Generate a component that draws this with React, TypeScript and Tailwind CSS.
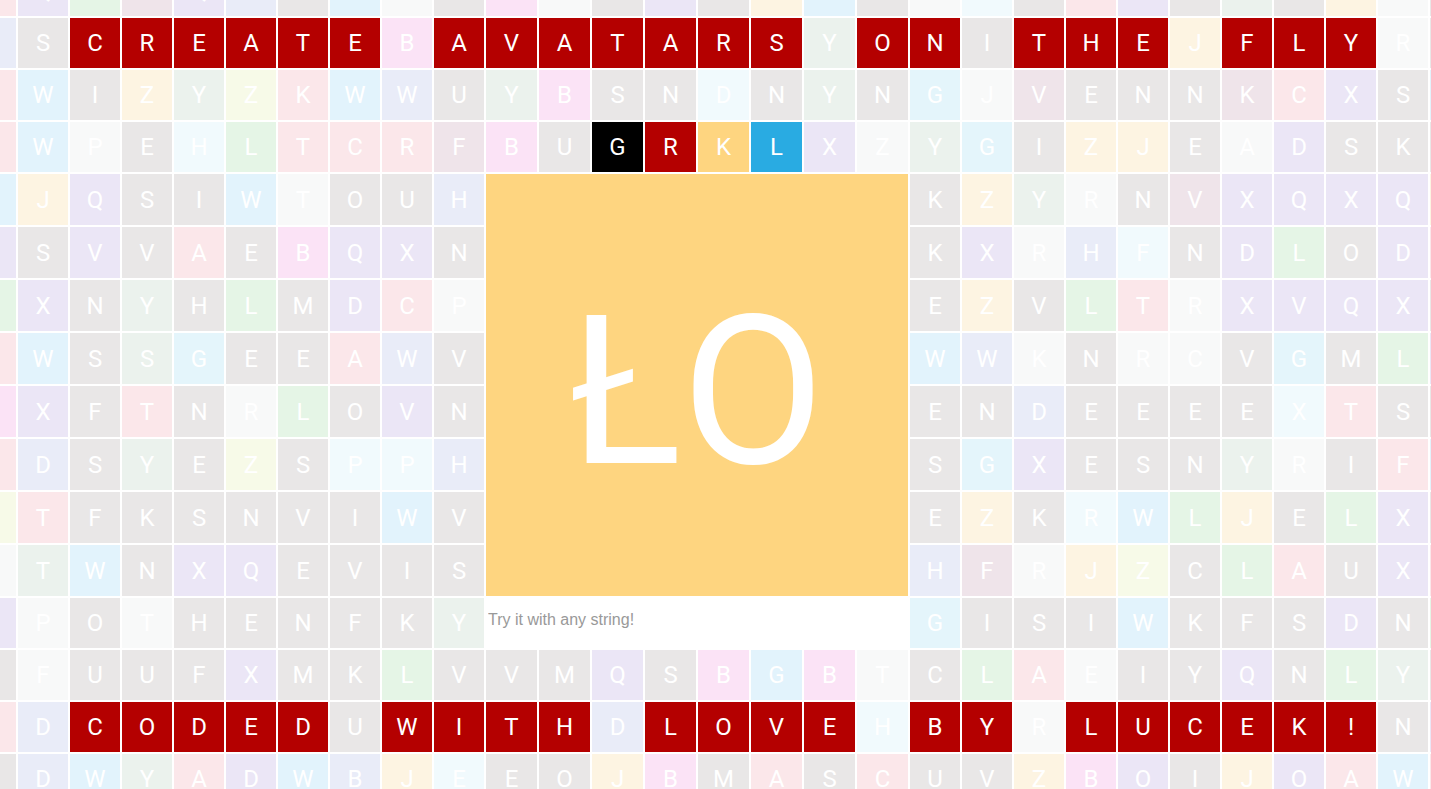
const tileColors: Record<string, string> = {
  g: "bg-[#e9e7e7]",
  p: "bg-[#ebe6f6]",
  l: "bg-[#e9ecf8]",
  b: "bg-[#e2f3fc]",
  c: "bg-[#e4f5fb]",
  k: "bg-[#fbe3f6]",
  r: "bg-[#fbe7ea]",
  m: "bg-[#efe4ea]",
  n: "bg-[#e5f5e6]",
  s: "bg-[#ebf2ed]",
  y: "bg-[#fdf4e2]",
  z: "bg-[#f7fae8]",
  w: "bg-[#f8f9f9]",
  h: "bg-[#f1fafd]",
  R: "bg-[#b40000]",
  K: "bg-[#000000]",
  Y: "bg-[#fed580]",
  B: "bg-[#29abe2]",
};

// each row: letters and colour codes for the columns -1..27, "-" marks the avatar block
const rows: [string, string][] = [
  ["RQTMQKRWAXIHUZEPLMYSDOGNBCVFA", "rpnmplgbwgkwgpgybgwhgrpgsgywg"],
  ["ASCREATEBAVATARSYONITHEJFLYRM", "lgRRRRRRkRRRRRRRsRRgRRRyRRRwg"],
  ["KWIZYZKWWUYBSNDNYNGJVENNKCXSO", "rbgyszrblgskgghgsgcwmgggmrpgb"],
  ["EWPEHLTCRFBUGRKLXZYGIZJEADSKT", "rbwghnrrrmkgKRYBpwscgyygwpggg"],
  ["BJQSIWTOUH--------KZYRNVXQXQE", "bypggbwggl--------gyswgmppppy"],
  ["NSVVAEBQXN--------KXRHFNDLODV", "pgpgrgkppg--------gpwlhgpngpr"],
  ["JXNYHLMDCP--------EZVLTRXVQXU", "npgsgngprw--------gygnrwppppg"],
  ["TWSSGEEAWV--------WWKNRCVGMLS", "rbgscggrlg--------blwgwwgcgnp"],
  ["OXFTNRLOVN--------ENDEEEEXTSW", "kpgrgwngpg--------gglgggghrgg"],
  ["MDSYEZSPPH--------SGXESNYRIFK", "rlgsgzghhl--------gcpgggswgrb"],
  ["ITFKSNVIWV--------EZKRWLJELXC", "zrggggggbg--------gyghbnygnpg"],
  ["UTWNXQEVIS--------HFRJZCLAUXL", "wsbgppgggg--------lmwyzgnrgpr"],
  ["CPOTHENFKY--------GISIWKFSDNY", "pwgwgggggs--------cgggbgggpgn"],
  ["DFUUFXMKLVVMQSBGBTCLAEIYQNLYH", "gwgggpggngggpgkbkwgnrwggpgnsg"],
  ["SDCODEDUWITHDLOVEHBYRLUCEK!NZ", "rlRRRRRgRRRRlRRRRhRRwRRRRRRgp"],
  ["GDWYADWBJEEOJBMASCUVZBOIJOAWQ", "glbsrpblyhggykgrgrggykpgyprbr"],
];

function Tile({ letter, code }: { letter: string; code: string }) {
  return (
    <div
      className={`flex items-center justify-center text-[24px] leading-none text-white ${tileColors[code]}`}
    >
      {letter}
    </div>
  );
}

export default function App() {
  return (
    <div className="h-[789px] w-full overflow-hidden bg-white font-['Roboto',sans-serif]">
      <div className="-ml-[34px] -mt-[34px] grid w-max grid-cols-[repeat(10,50px)_repeat(8,51px)_repeat(11,50px)] grid-rows-[repeat(4,50px)_repeat(8,51px)_repeat(4,50px)] gap-[2px]">
        <div className="col-[11/19] row-[5/13] flex items-center justify-center bg-[#fed580] pt-[14px] text-[208px] leading-none text-white">
          ŁO
        </div>
        <div className="col-[11/19] row-[13/14] flex bg-white">
          <input
            type="text"
            placeholder="Try it with any string!"
            className="h-full w-full bg-white pb-[6px] pl-[2px] font-['Liberation_Sans',Arial,sans-serif] text-[16px] text-[#555] outline-none placeholder:text-[#999]"
          />
        </div>
        {rows.map(([letters, codes], r) =>
          letters.split("").map((ch, c) =>
            ch === "-" ? null : <Tile key={`${r}-${c}`} letter={ch} code={codes[c]} />
          )
        )}
      </div>
    </div>
  );
}
